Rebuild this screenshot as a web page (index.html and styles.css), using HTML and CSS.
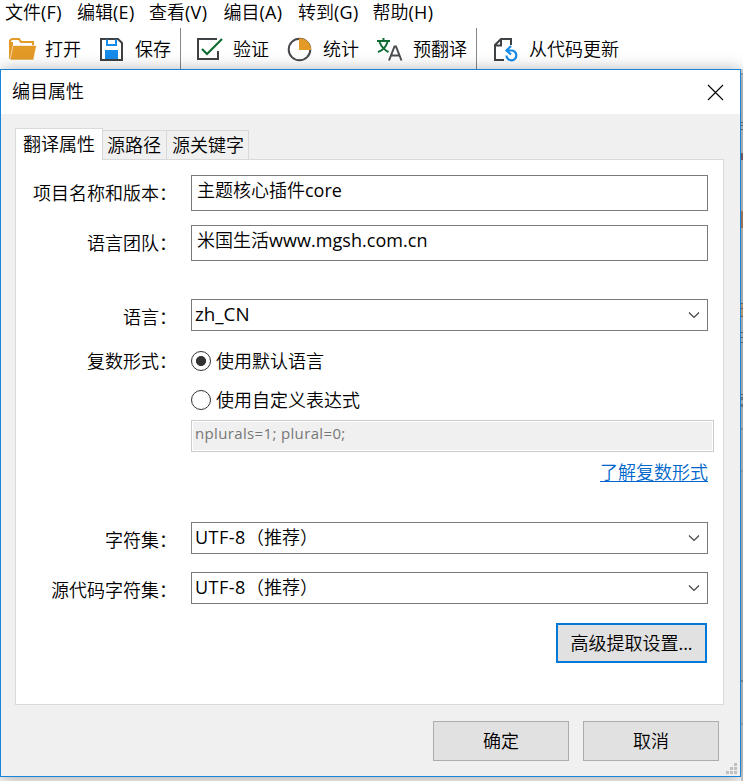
FILE: index.html
```html
<!DOCTYPE html>
<html lang="zh-CN">
<head>
<meta charset="utf-8">
<title>编目属性</title>
<link rel="stylesheet" href="styles.css">
</head>
<body>
<nav class="menu">
  <span>文件<i class="lat">(F)</i></span><span>编辑<i class="lat">(E)</i></span><span>查看<i class="lat">(V)</i></span><span>编目<i class="lat">(A)</i></span><span>转到<i class="lat">(G)</i></span><span>帮助<i class="lat">(H)</i></span>
</nav>
<div class="toolbar">
  <div class="tool"><svg width="28" height="26" viewBox="0 0 28 26"><path d="M1 22V3.500L3 2h7l2 3h12v4" fill="none" stroke="#e39a27" stroke-width="2"/><path d="M1 5h3v17H1z" fill="#e39a27"/><path d="M4 8.500h23.500l-3 14.500H1z" fill="#e39a27" stroke="#fff" stroke-width=".6"/></svg><span>打开</span></div>
  <div class="tool"><svg width="26" height="26" viewBox="0 0 26 26"><path d="M2 2h17l4 4v17H2z" fill="none" stroke="#3f4244" stroke-width="2"/><path d="M8 2.500V8h9V2.500" fill="none" stroke="#158bea" stroke-width="2"/><path d="M6 13h13v9H6z" fill="#158bea"/></svg><span>保存</span></div>
  <div class="sep"></div>
  <div class="tool"><svg width="28" height="26" viewBox="0 0 28 26"><path d="M20 2H1v20h20v-8" fill="none" stroke="#3f4244" stroke-width="2"/><path d="M5 12l5 5L25 2" fill="none" stroke="#0e6b33" stroke-width="2.200"/></svg><span>验证</span></div>
  <div class="tool"><svg width="26" height="26" viewBox="0 0 26 26"><circle cx="12.500" cy="12.500" r="10.800" fill="#fff" stroke="#46484b" stroke-width="2"/><path d="M12 1.200a11.500 11.500 0 0 1 12 11.800H12z" fill="#e39a27"/></svg><span>统计</span></div>
  <div class="tool"><svg width="28" height="26" viewBox="0 0 28 26"><g fill="none" stroke="#0e6b33" stroke-width="2"><path d="M0 4h13M6.500 1v3M2.500 5c2 5 4 7.500 9 10M10.500 5c-1.500 5-4 8-9.500 10"/></g><path d="M12 23.500l5.500-14h1.500l5.500 14M14 18.500h8.500" fill="none" stroke="#4b4e51" stroke-width="2"/></svg><span>预翻译</span></div>
  <div class="sep"></div>
  <div class="tool"><svg width="28" height="26" viewBox="0 0 28 26"><path d="M11 23H2V8l6-6h10v6M2 8.500h6V2" fill="none" stroke="#3f4244" stroke-width="2"/><path d="M13.500 18.500A4.900 4.900 0 1 0 18 13.500H14M18 9l-4.500 4.500L18 17.500" fill="none" stroke="#158bea" stroke-width="2.200"/></svg><span>从代码更新</span></div>
</div>
<div class="work">
  <section class="dialog">
    <header class="title"><span>编目属性</span><svg width="17" height="17" viewBox="0 0 17 17"><path d="M1 1l15 15M16 1L1 16" stroke="#000" stroke-width="1.100"/></svg></header>
    <div class="tabs"><div class="tab on">翻译属性</div><div class="tab t2">源路径</div><div class="tab t3">源关键字</div></div>
    <div class="panel">
      <div class="row r1"><label>项目名称和版本：</label><div class="box area"><span>主题核心插件<i class="lat">core</i></span></div></div>
      <div class="row r2"><label>语言团队：</label><div class="box area"><span>米国生活<i class="lat site">www.mgsh.com.cn</i></span></div></div>
      <div class="row r3"><label class="low">语言：</label><div class="box combo"><span class="lat zh">zh_CN</span><svg width="12" height="8" viewBox="0 0 12 8"><path d="M1 1.500l5 5 5-5" fill="none" stroke="#444" stroke-width="1.200"/></svg></div></div>
      <div class="row r4"><label>复数形式：</label><div class="radio"><b class="dot sel"></b><span>使用默认语言</span></div></div>
      <div class="row r5"><label></label><div class="radio"><b class="dot"></b><span>使用自定义表达式</span></div></div>
      <div class="row r6"><label></label><div class="disabled"><span class="lat">nplurals=1; plural=0;</span></div></div>
      <div class="linkrow"><a>了解复数形式</a></div>
      <div class="row r7"><label class="low">字符集：</label><div class="box combo"><span><i class="lat utf">UTF-8</i>（推荐）</span><svg width="12" height="8" viewBox="0 0 12 8"><path d="M1 1.500l5 5 5-5" fill="none" stroke="#444" stroke-width="1.200"/></svg></div></div>
      <div class="row r8"><label class="low">源代码字符集：</label><div class="box combo"><span><i class="lat utf">UTF-8</i>（推荐）</span><svg width="12" height="8" viewBox="0 0 12 8"><path d="M1 1.500l5 5 5-5" fill="none" stroke="#444" stroke-width="1.200"/></svg></div></div>
      <div class="btn adv">高级提取设置<i class="lat">...</i></div>
    </div>
    <footer class="actions"><div class="btn">确定</div><div class="btn">取消</div></footer>
    <svg class="grip" width="11" height="11" viewBox="0 0 11 11"><path d="M8 0h3v3H8zM4 4h3v3H4zM8 4h3v3H8zM0 8h3v3H0zM4 8h3v3H4zM8 8h3v3H8z" fill="#bfbfbf"/></svg>
  </section>
  <div class="edge"></div>
</div>
</body>
</html>
```
FILE: styles.css
```css
* { box-sizing: border-box; }
body {
  margin: 0;
  width: 743px;
  height: 781px;
  overflow: hidden;
  background: #fff;
  color: #000;
  font: 350 18px/24px "Noto Sans CJK SC DemiLight", "Noto Sans CJK SC", sans-serif;
  white-space: nowrap;
}
svg { display: block; flex: none; }
.lat { font-family: "Open Sans", "Noto Sans", sans-serif; font-style: normal; font-weight: 400; }
.menu { display: flex; height: 28px; padding-left: 5px; line-height: 23px; }
.menu span { width: 74.500px; flex: none; }
.menu span:nth-child(-n+2) { width: 72px; }
.menu .lat { font-size: 18px; letter-spacing: .3px; }
.toolbar { display: flex; height: 41px; padding-left: 9px; }
.tool { display: flex; height: 41px; margin-right: 18px; padding-top: 9px; }
.tool svg { margin-right: 8px; }
.tool svg[width="26"] { margin-right: 10px; }
.tool span { line-height: 22px; }
.sep { width: 1px; height: 41px; margin: 0 16px 0 -9px; background: #888; }
.work { display: flex; height: 712px; }
.dialog {
  position: relative;
  width: 741px;
  height: 708px;
  flex: none;
  border: 1px solid #1883d7;
  background: #f0f0f0;
  box-shadow: 0 2px 16px rgba(0, 0, 0, .36);
}
.title {
  display: flex;
  justify-content: space-between;
  align-items: center;
  height: 44px;
  padding: 0 16px 0 11px;
  background: #fff;
}
.title span { padding-bottom: 4px; }
.tabs { display: flex; align-items: flex-end; height: 45px; margin-left: 14px; }
.tab { height: 29px; border: 1px solid #d9d9d9; border-left: 0; border-bottom: 0; line-height: 27px; text-align: center; }
.tab.on { position: relative; width: 88px; height: 32px; margin-bottom: -1px; border-left: 1px solid #d9d9d9; background: #fff; line-height: 28px; }
.t2 { width: 64px; padding-right: 1px; }
.t3 { width: 82px; padding-left: 1px; }
.panel {
  width: 709px;
  height: 546px;
  margin-left: 14px;
  padding: 15px 15px 0 0;
  border: 1px solid #d9d9d9;
  background: #fff;
}
.row { display: grid; grid-template-columns: 161px 517px; column-gap: 14px; align-items: center; }
.row label { padding: 0 0 3px; text-align: right; }
.row .low { padding: 1px 0 0; }
.box { display: flex; border: 1px solid #7a7a7a; background: #fff; }
.area { height: 36px; padding: 1px 0 0 5px; }
.site { letter-spacing: .05px; }
.combo { height: 32px; padding: 0 7px 0 3px; align-items: center; justify-content: space-between; }
.combo > span { line-height: 26px; padding-bottom: 3px; }
.zh { font-size: 18.800px; }
.r2 { margin-top: 14px; }
.r3 { margin-top: 38px; }
.r4 { height: 24px; margin-top: 17px; }
.r4 label { padding-bottom: 1px; }
.r5 { height: 24px; margin-top: 15px; }
.r6 { margin-top: 9px; }
.radio { display: flex; align-items: center; gap: 5px; }
.radio span { padding-bottom: 1px; }
.dot { width: 20px; height: 20px; border: 1px solid #333; border-radius: 50%; }
.sel { background: radial-gradient(circle, #333 4.700px, #fff 5.300px); }
.utf { letter-spacing: .5px; }
.disabled {
  width: 523px;
  height: 32px;
  padding-left: 3px;
  border: 1px solid #ccc;
  background: #f0f0f0;
  box-shadow: inset 0 0 0 1px #fff;
  color: #777;
  font-size: 15px;
  letter-spacing: .35px;
  line-height: 24px;
}
.linkrow { height: 24px; margin-top: 9px; text-align: right; }
.linkrow a { display: block; width: 108px; height: 21px; margin-left: auto; line-height: 20px; border-bottom: 1px solid #0066cc; color: #0066cc; }
.r7 { margin-top: 37px; }
.r8 { margin-top: 18px; }
.btn { width: 136px; height: 40px; border: 1px solid #adadad; background: #e1e1e1; text-align: center; line-height: 36px; }
.adv { width: 151px; margin: 19px 1px 0 auto; border: 2px solid #0078d7; line-height: 34px; }
.actions { display: flex; justify-content: flex-end; gap: 14px; margin: 16px 21px 0 0; }
.grip { position: absolute; right: 3px; bottom: 2px; }
.edge {
  width: 2px;
  height: 712px;
  background: linear-gradient(#d8d8d8 0 4px, #aaa 4px 6px, #ccc 6px 53px, #777 53px 54px, #ccc 54px 56px, #777 56px 57px, #ccc 57px 60px, #777 60px 61px, #ccc 61px 84px, #777 84px 86px, #8b6666 86px 91px, #ccc 91px 142px, #b98865 142px 159px, #c8c8c8 159px 234px, #777 234px 235px, #d5b48c 235px 239px, #777 239px 240px, #d5b48c 240px 247px, #777 247px 248px, #c8c8c8 248px 263px, #777 263px 264px, #c8c8c8 264px 268px, #777 268px 269px, #c8c8c8 269px 273px, #777 273px 274px, #c8c8c8 274px 325px, #777 325px 326px, #c8c8c8 326px 328px, #888 328px 331px, #c8c8c8 331px 335px, #888 335px 338px, #c8c8c8 338px 359px, #aaa 359px 361px, #c8c8c8 361px 401px, #b5b5b5 401px 403px, #c8c8c8 403px 611px, #999 611px 613px, #ccc 613px 654px, #b8b8b8 654px 656px, #d0d0d0 656px);
}
```
